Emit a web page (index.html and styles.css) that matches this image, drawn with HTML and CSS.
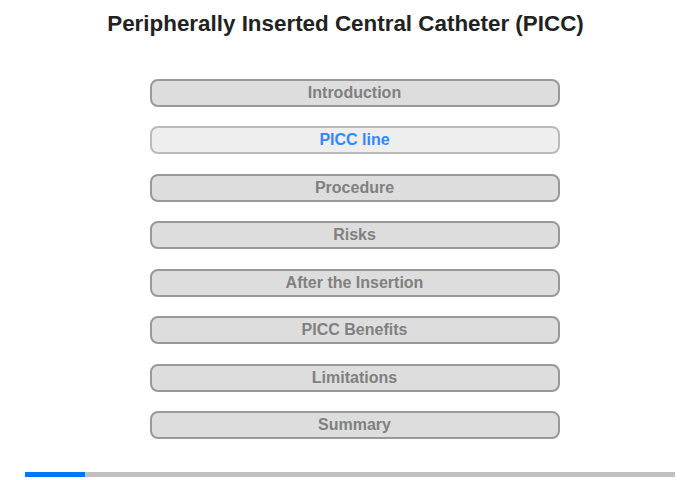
FILE: index.html
```html
<!DOCTYPE html>
<html>
<head>
<meta charset="utf-8">
<link rel="stylesheet" href="styles.css">
</head>
<body>
<div class="page">
  <h1 class="title">Peripherally Inserted Central Catheter (PICC)</h1>
  <nav class="menu">
    <div class="item">Introduction</div>
    <div class="item active">PICC line</div>
    <div class="item">Procedure</div>
    <div class="item">Risks</div>
    <div class="item">After the Insertion</div>
    <div class="item">PICC Benefits</div>
    <div class="item">Limitations</div>
    <div class="item">Summary</div>
  </nav>
  <div class="progress"><div class="progress-fill"></div></div>
</div>
</body>
</html>
```
FILE: styles.css
```css
html, body {
  margin: 0;
  padding: 0;
  background: #ffffff;
}
.page {
  width: 700px;
  height: 480px;
  display: flex;
  flex-direction: column;
  align-items: center;
  font-family: "Liberation Sans", Arial, sans-serif;
}
.title {
  margin: 11px 9px 0 0;
  font-size: 22.4px;
  font-weight: bold;
  color: #222222;
  line-height: 25px;
}
.menu {
  margin: 43px 0 0 9px;
  display: flex;
  flex-direction: column;
  gap: 19.43px;
}
.item {
  box-sizing: border-box;
  width: 410px;
  height: 28px;
  border: 2px solid #999999;
  border-radius: 8px;
  background: #dddddd;
  color: #808080;
  font-size: 16px;
  font-weight: bold;
  text-align: center;
  line-height: 24px;
}
.item.active {
  background: #eeeeee;
  border-color: #bbbbbb;
  color: #3388ff;
}
.progress {
  margin-top: auto;
  margin-bottom: 3px;
  width: 650px;
  height: 5px;
  background: #c0c0c0;
}
.progress-fill {
  width: 60px;
  height: 100%;
  background: #0077ff;
}
```
